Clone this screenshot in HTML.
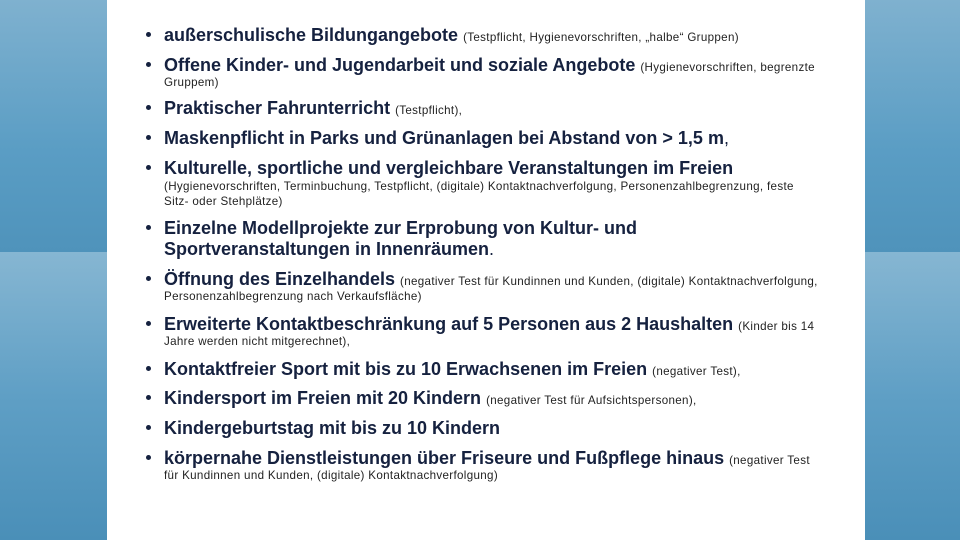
<!DOCTYPE html>
<html><head><meta charset="utf-8"><style>
body{margin:0;width:960px;height:540px;overflow:hidden;position:relative;font-family:"Liberation Sans",Arial,sans-serif;background:#5a9cc2}
.bg{position:absolute;left:0;width:960px}
.t{top:0;height:252px;background:linear-gradient(180deg,#7fb1cf 0%,#5a9dc4 60%,#4f93bb 100%)}
.b{top:252px;height:288px;background:linear-gradient(180deg,#86b6d2 0%,#5f9fc5 50%,#4a8fb8 100%)}
.panel{position:absolute;left:107px;top:0;width:758px;height:540px;background:#fff}
.l{position:absolute;left:164px;color:#15213f;white-space:nowrap}
.h{font-weight:bold;font-size:18px;line-height:20px}
.s{font-weight:normal;font-size:11.6px;letter-spacing:0.33px;color:#222}
.d{position:absolute;left:146px;width:5px;height:5px;border-radius:50%;background:#15213f}
</style></head><body>
<div class="bg t"></div><div class="bg b"></div>
<div class="panel"></div>
<div class="d" style="top:32px"></div><div class="l h" style="top:25px">außerschulische Bildungangebote <span class="s">(Testpflicht, Hygienevorschriften, „halbe“ Gruppen)</span></div>
<div class="d" style="top:62px"></div><div class="l h" style="top:55px">Offene Kinder- und Jugendarbeit und soziale Angebote <span class="s">(Hygienevorschriften, begrenzte</span></div>
<div class="l s" style="top:76px">Gruppem)</div>
<div class="d" style="top:105px"></div><div class="l h" style="top:98px">Praktischer Fahrunterricht <span class="s">(Testpflicht),</span></div>
<div class="d" style="top:135px"></div><div class="l h" style="top:128px">Maskenpflicht in Parks und Grünanlagen bei Abstand von &gt; 1,5 m<span style="font-weight:normal">,</span></div>
<div class="d" style="top:165px"></div><div class="l h" style="top:158px">Kulturelle, sportliche und vergleichbare Veranstaltungen im Freien</div>
<div class="l s" style="top:180px">(Hygienevorschriften, Terminbuchung, Testpflicht, (digitale) Kontaktnachverfolgung, Personenzahlbegrenzung, feste</div>
<div class="l s" style="top:195px">Sitz- oder Stehplätze)</div>
<div class="d" style="top:225px"></div><div class="l h" style="top:218px">Einzelne Modellprojekte zur Erprobung von Kultur- und</div>
<div class="l h" style="top:239px">Sportveranstaltungen in Innenräumen<span style="font-weight:normal">.</span></div>
<div class="d" style="top:276px"></div><div class="l h" style="top:269px">Öffnung des Einzelhandels <span class="s">(negativer Test für Kundinnen und Kunden, (digitale) Kontaktnachverfolgung,</span></div>
<div class="l s" style="top:290px">Personenzahlbegrenzung nach Verkaufsfläche)</div>
<div class="d" style="top:321px"></div><div class="l h" style="top:314px">Erweiterte Kontaktbeschränkung auf 5 Personen aus 2 Haushalten <span class="s">(Kinder bis 14</span></div>
<div class="l s" style="top:335px">Jahre werden nicht mitgerechnet),</div>
<div class="d" style="top:366px"></div><div class="l h" style="top:359px">Kontaktfreier Sport mit bis zu 10 Erwachsenen im Freien <span class="s">(negativer Test),</span></div>
<div class="d" style="top:395px"></div><div class="l h" style="top:388px">Kindersport im Freien mit 20 Kindern <span class="s">(negativer Test für Aufsichtspersonen),</span></div>
<div class="d" style="top:425px"></div><div class="l h" style="top:418px">Kindergeburtstag mit bis zu 10 Kindern</div>
<div class="d" style="top:455px"></div><div class="l h" style="top:448px">körpernahe Dienstleistungen über Friseure und Fußpflege hinaus <span class="s">(negativer Test</span></div>
<div class="l s" style="top:469px">für Kundinnen und Kunden, (digitale) Kontaktnachverfolgung)</div>
</body></html>
